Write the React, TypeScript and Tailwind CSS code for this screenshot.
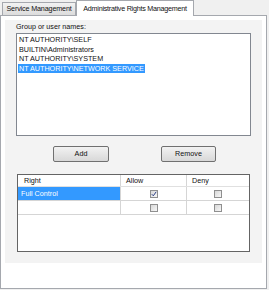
import React from "react";

const font = { fontFamily: '"Liberation Sans", Arial, sans-serif' };

function Check({ checked }: { checked?: boolean }) {
  return (
    <div className="w-[8px] h-[8px] border border-[#8f8f8f] bg-gradient-to-br from-[#d8d8d8] to-[#f7f7f7] flex items-center justify-center">
      {checked && (
        <svg width="6" height="6" viewBox="0 0 6 6">
          <path d="M0.8 3.2 L2.3 4.8 L5.2 0.8" stroke="#2c3f86" strokeWidth="1" fill="none" />
        </svg>
      )}
    </div>
  );
}

export default function App() {
  const names = [
    "NT AUTHORITY\\SELF",
    "BUILTIN\\Administrators",
    "NT AUTHORITY\\SYSTEM",
    "NT AUTHORITY\\NETWORK SERVICE",
  ];
  return (
    <div className="w-[269px] h-[290px] bg-[#f0f0f0] text-[7.2px] text-[#111] leading-none whitespace-nowrap" style={font}>
      <div className="flex items-end h-[15px] pl-[2px]">
        <div className="h-[13px] w-[74px] border border-b-0 border-[#a5a8ae] bg-gradient-to-b from-[#f2f2f2] to-[#dcdcdc] flex items-center justify-center tracking-[-0.15px]">
          Service Management
        </div>
        <div className="relative z-10 -mb-px h-[16px] w-[118px] border border-b-0 border-[#a5a8ae] bg-white flex items-center justify-center tracking-[-0.25px]">
          Administrative Rights Management
        </div>
      </div>
      <div className="h-[274px] w-[267px] border border-[#a5a8ae] bg-white pt-[4px] px-[4px]">
        <div className="h-[243px] bg-[#f3f3f3] px-[11px]">
          <div className="h-[13px] flex items-center">Group or user names:</div>
          <div className="h-[103px] border border-[#828790] bg-white pt-[1px] pl-px">
            {names.map((n, i) => (
              <div
                key={n}
                className={
                  "h-[9.5px] flex items-center px-px w-max " +
                  (i === 3 ? "bg-[#3399ff] text-white" : "")
                }
              >
                {n}
              </div>
            ))}
          </div>
          <div className="flex mt-[10px] h-[16px]">
            <div className="ml-[37px] w-[56px] h-[16px] border border-[#707070] rounded-[2px] bg-gradient-to-b from-[#f2f2f2] to-[#d8d8d8] flex items-center justify-center">
              Add
            </div>
            <div className="ml-[52px] w-[55px] h-[16px] border border-[#707070] rounded-[2px] bg-gradient-to-b from-[#f2f2f2] to-[#d8d8d8] flex items-center justify-center">
              Remove
            </div>
          </div>
          <div className="mt-[12px] mx-px h-[78px] border border-[#646464] bg-white">
            <div className="flex h-[12px] border-b border-[#e0e0e0]">
              <div className="w-[103px] border-r border-[#d5d5d5] flex items-center pl-[6px]">Right</div>
              <div className="w-[66px] border-r border-[#d5d5d5] flex items-center pl-[5px]">Allow</div>
              <div className="flex-1 flex items-center pl-[5px]">Deny</div>
            </div>
            <div className="flex h-[14px] border-b border-[#d5d5d5]">
              <div className="w-[103px] border-r border-[#d5d5d5] bg-[#3399ff] text-white flex items-center pl-[3px]">Full Control</div>
              <div className="w-[66px] border-r border-[#d5d5d5] flex items-center justify-center"><Check checked /></div>
              <div className="flex-1 flex items-center justify-center"><Check /></div>
            </div>
            <div className="flex h-[14px] border-b border-[#d5d5d5]">
              <div className="w-[103px] border-r border-[#d5d5d5]"></div>
              <div className="w-[66px] border-r border-[#d5d5d5] flex items-center justify-center"><Check /></div>
              <div className="flex-1 flex items-center justify-center"><Check /></div>
            </div>
          </div>
        </div>
      </div>
    </div>
  );
}
